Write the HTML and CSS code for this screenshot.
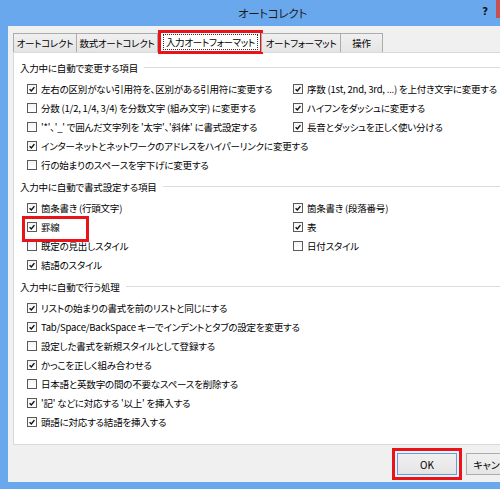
FILE: index.html
```html
<!DOCTYPE html>
<html lang="ja">
<head>
<meta charset="utf-8">
<title>オートコレクト</title>
<link rel="stylesheet" href="styles.css">
</head>
<body>
<div class="window">
  <div class="titlebar">
    <span class="title">オートコレクト</span>
    <span class="help">?</span>
    <span class="close"></span>
  </div>
  <div class="client">
    <div class="tabs">
      <div class="tab t1">オートコレクト</div>
      <div class="tab t2">数式オートコレクト</div>
      <div class="tab active"><span class="focus">入力オートフォーマット</span></div>
      <div class="tab t4">オートフォーマット</div>
      <div class="tab t5">操作</div>
    </div>
    <div class="panel">
      <section class="group">
        <div class="group-title">入力中に自動で変更する項目</div>
        <div class="grid">
          <div class="item"><span class="cb on"><svg viewBox="0 0 10 10"><path d="M2 5.2 L4.2 7.4 L8 2.6"/></svg></span>左右の区別がない引用符を、区別がある引用符に変更する</div>
          <div class="item"><span class="cb on"><svg viewBox="0 0 10 10"><path d="M2 5.2 L4.2 7.4 L8 2.6"/></svg></span>序数 (1st, 2nd, 3rd, ...) を上付き文字に変更する</div>
          <div class="item"><span class="cb"></span>分数 (1/2, 1/4, 3/4) を分数文字 (組み文字) に変更する</div>
          <div class="item"><span class="cb on"><svg viewBox="0 0 10 10"><path d="M2 5.2 L4.2 7.4 L8 2.6"/></svg></span>ハイフンをダッシュに変更する</div>
          <div class="item"><span class="cb"></span>'*'、'_' で囲んだ文字列を '太字'、'斜体' に書式設定する</div>
          <div class="item"><span class="cb on"><svg viewBox="0 0 10 10"><path d="M2 5.2 L4.2 7.4 L8 2.6"/></svg></span>長音とダッシュを正しく使い分ける</div>
          <div class="item"><span class="cb on"><svg viewBox="0 0 10 10"><path d="M2 5.2 L4.2 7.4 L8 2.6"/></svg></span>インターネットとネットワークのアドレスをハイパーリンクに変更する</div>
          <div class="item"></div>
          <div class="item"><span class="cb"></span>行の始まりのスペースを字下げに変更する</div>
        </div>
      </section>
      <section class="group">
        <div class="group-title">入力中に自動で書式設定する項目</div>
        <div class="grid">
          <div class="item"><span class="cb on"><svg viewBox="0 0 10 10"><path d="M2 5.2 L4.2 7.4 L8 2.6"/></svg></span>箇条書き (行頭文字)</div>
          <div class="item"><span class="cb on"><svg viewBox="0 0 10 10"><path d="M2 5.2 L4.2 7.4 L8 2.6"/></svg></span>箇条書き (段落番号)</div>
          <div class="item marked"><span class="cb on"><svg viewBox="0 0 10 10"><path d="M2 5.2 L4.2 7.4 L8 2.6"/></svg></span>罫線</div>
          <div class="item"><span class="cb on"><svg viewBox="0 0 10 10"><path d="M2 5.2 L4.2 7.4 L8 2.6"/></svg></span>表</div>
          <div class="item"><span class="cb"></span>既定の見出しスタイル</div>
          <div class="item"><span class="cb"></span>日付スタイル</div>
          <div class="item"><span class="cb on"><svg viewBox="0 0 10 10"><path d="M2 5.2 L4.2 7.4 L8 2.6"/></svg></span>結語のスタイル</div>
        </div>
      </section>
      <section class="group">
        <div class="group-title">入力中に自動で行う処理</div>
        <div class="list">
          <div class="item"><span class="cb on"><svg viewBox="0 0 10 10"><path d="M2 5.2 L4.2 7.4 L8 2.6"/></svg></span>リストの始まりの書式を前のリストと同じにする</div>
          <div class="item"><span class="cb on"><svg viewBox="0 0 10 10"><path d="M2 5.2 L4.2 7.4 L8 2.6"/></svg></span>Tab/Space/BackSpace キーでインデントとタブの設定を変更する</div>
          <div class="item"><span class="cb"></span>設定した書式を新規スタイルとして登録する</div>
          <div class="item"><span class="cb on"><svg viewBox="0 0 10 10"><path d="M2 5.2 L4.2 7.4 L8 2.6"/></svg></span>かっこを正しく組み合わせる</div>
          <div class="item"><span class="cb"></span>日本語と英数字の間の不要なスペースを削除する</div>
          <div class="item"><span class="cb on"><svg viewBox="0 0 10 10"><path d="M2 5.2 L4.2 7.4 L8 2.6"/></svg></span>'記' などに対応する '以上' を挿入する</div>
          <div class="item"><span class="cb on"><svg viewBox="0 0 10 10"><path d="M2 5.2 L4.2 7.4 L8 2.6"/></svg></span>頭語に対応する結語を挿入する</div>
        </div>
      </section>
    </div>
    <div class="buttons">
      <button class="btn default">OK</button>
      <button class="btn">キャンセル</button>
    </div>
  </div>
</div>
</body>
</html>
```

FILE: styles.css
```css
* { box-sizing: border-box; }
html, body { margin: 0; padding: 0; }
body {
  font-family: "Noto Sans CJK JP", "Noto Sans", sans-serif;
  font-feature-settings: "palt";
  color: #000;
  background: #6aa8ee;
}
.window {
  width: 500px;
  height: 489px;
  background: #6aa8ee;
  overflow: hidden;
  display: flex;
  flex-direction: column;
}
.titlebar {
  height: 26px;
  flex: none;
  display: flex;
  align-items: center;
}
.title {
  margin-left: 238px;
  font-size: 11.5px;
  letter-spacing: -0.3px;
  color: #1a1a1a;
}
.help {
  margin-left: auto;
  margin-right: 8px;
  font-family: "DejaVu Sans", sans-serif;
  font-weight: bold;
  font-size: 10px;
  color: #111;
  margin-top: -4px;
}
.close {
  align-self: flex-start;
  width: 4px;
  height: 18px;
  background: #c75050;
}
.client {
  margin-left: 8px;
  height: 456px;
  flex: none;
  background: #f0f0f0;
  padding: 5px 0 0 5px;
  overflow: hidden;
}
.tabs {
  display: flex;
  align-items: flex-end;
  height: 21px;
  position: relative;
  z-index: 2;
}
.tab {
  height: 19px;
  border: 1px solid #acacac;
  border-bottom: none;
  background: linear-gradient(#f0f0f0, #e5e5e5);
  font-size: 9.5px;
  letter-spacing: -0.3px;
  line-height: 18px;
  text-align: center;
  white-space: nowrap;
  flex: none;
}
.t1 { width: 64px; }
.t2 { width: 82px; margin-left: -1px; }
.t4 { width: 80px; margin-left: -1px; }
.t5 { width: 43px; margin-left: -1px; }
.tab.active {
  width: 103px;
  height: 22px;
  margin-left: 1px;
  margin-bottom: -1px;
  background: #fff;
  padding-top: 2px;
  line-height: 15px;
  outline: 3px solid #e8141a;
  outline-offset: -2px;
}
.focus {
  display: inline-block;
  border: 1px dotted #333;
  padding: 0 2px;
  line-height: 14px;
}
.panel {
  width: 520px;
  height: 393px;
  border: 1px solid #d9d9d9;
  background: #fff;
  padding: 5px 0 0 6px;
}
.group + .group { margin-top: 3px; }
.group-title {
  display: flex;
  align-items: center;
  height: 19px;
  font-size: 9.5px;
  letter-spacing: -0.2px;
  margin-bottom: 2px;
  white-space: nowrap;
}
.group-title::after {
  content: "";
  flex: 1;
  height: 1px;
  background: #dcdcdc;
  margin-left: 6px;
}
.grid {
  display: grid;
  grid-template-columns: 266px auto;
  margin-left: 7px;
}
.list { margin-left: 7px; }
.item {
  height: 19px;
  display: flex;
  align-items: center;
  font-size: 9.5px;
  letter-spacing: -0.2px;
  white-space: nowrap;
}
.cb {
  width: 10px;
  height: 10px;
  border: 1px solid #5a5a5a;
  background: linear-gradient(#f4f4f4, #fff);
  margin-right: 4px;
  flex: none;
  display: inline-flex;
}
.cb svg {
  width: 8px;
  height: 8px;
}
.cb svg path {
  fill: none;
  stroke: #111;
  stroke-width: 1.8;
}
.marked { position: relative; }
.marked::after {
  content: "";
  position: absolute;
  left: -5px;
  top: -1px;
  width: 61px;
  height: 20px;
  border: 3px solid #e8141a;
}
.buttons {
  display: flex;
  gap: 9px;
  padding-left: 384px;
  margin-top: 8px;
}
.btn {
  width: 60px;
  height: 22px;
  flex: none;
  border: 1px solid #acacac;
  background: linear-gradient(#f0f0f0, #e5e5e5);
  font-family: "Noto Sans CJK JP", "Noto Sans", sans-serif;
  font-feature-settings: "palt";
  font-size: 10px;
  color: #000;
  padding: 0;
  white-space: nowrap;
}
.btn.default {
  border-color: #5aa0e6;
  outline: 3px solid #e8141a;
  outline-offset: 2px;
}
```
